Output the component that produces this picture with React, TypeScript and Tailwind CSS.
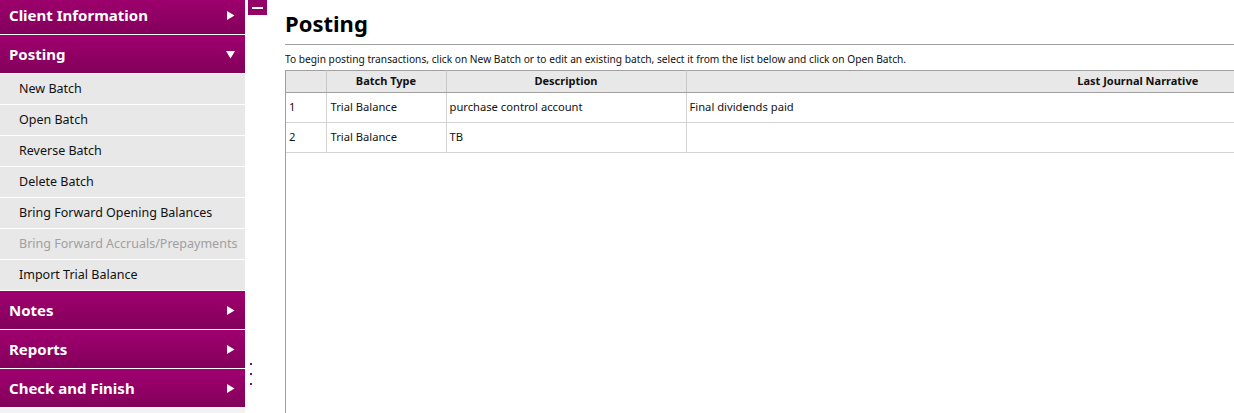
const postingItems = [
  { label: 'New Batch' },
  { label: 'Open Batch' },
  { label: 'Reverse Batch' },
  { label: 'Delete Batch' },
  { label: 'Bring Forward Opening Balances' },
  { label: 'Bring Forward Accruals/Prepayments', disabled: true },
  { label: 'Import Trial Balance' },
];

const batches = [
  { no: 1, type: 'Trial Balance', description: 'purchase control account', narrative: 'Final dividends paid' },
  { no: 2, type: 'Trial Balance', description: 'TB', narrative: '' },
];

function SectionHeader({ title, open }: { title: string; open?: boolean }) {
  return (
    <div className="flex h-[38px] shrink-0 items-center justify-between bg-gradient-to-b from-[#a0006f] to-[#83005b] pl-[9px] pr-[10px] text-[15px] font-bold text-white">
      <span>{title}</span>
      {open ? (
        <svg width="9" height="9" viewBox="0 0 9 9">
          <path d="M0 1h9L4.5 8.5z" fill="#fff" />
        </svg>
      ) : (
        <svg width="9" height="9" viewBox="0 0 9 9">
          <path d="M1 0v9l7.5-4.5z" fill="#fff" />
        </svg>
      )}
    </div>
  );
}

function Sidebar() {
  return (
    <div className="mt-[-4px] flex w-[245px] shrink-0 flex-col gap-px bg-white">
      <SectionHeader title="Client Information" />
      <SectionHeader title="Posting" open />
      <div className="flex shrink-0 flex-col gap-px">
        {postingItems.map((it) => (
          <div
            key={it.label}
            className={`flex h-[30px] shrink-0 items-center bg-[#e8e8e8] pl-[19px] text-[12.5px] ${
              it.disabled ? 'text-[#a0a0a0]' : 'text-[#111]'
            }`}
          >
            {it.label}
          </div>
        ))}
      </div>
      <SectionHeader title="Notes" />
      <SectionHeader title="Reports" />
      <SectionHeader title="Check and Finish" />
      <div className="h-[20px] shrink-0 bg-[#f2f2f2]" />
    </div>
  );
}

export default function App() {
  return (
    <div
      className="flex h-[413px] w-[1234px] overflow-hidden bg-white"
      style={{ fontFamily: '"Noto Sans", "Open Sans", sans-serif' }}
    >
      <Sidebar />
      <div className="flex w-[40px] shrink-0 flex-col pl-[3px]">
        <div className="flex h-[15px] w-[19px] shrink-0 items-center justify-center bg-[#930067]">
          <div className="h-[2px] w-[11px] bg-white" />
        </div>
        <div className="ml-[2px] mt-[348px] flex flex-col gap-[8px]">
          <div className="h-[2px] w-[2px] bg-[#930067]" />
          <div className="h-[2px] w-[2px] bg-[#930067]" />
          <div className="h-[2px] w-[2px] bg-[#930067]" />
        </div>
      </div>
      <div className="flex min-w-0 flex-1 flex-col overflow-hidden">
        <h1 className="pt-[8px] text-[22px] font-bold leading-[30px] text-black">Posting</h1>
        <div className="mt-[6px] h-px shrink-0 bg-[#a0a0a0]" />
        <p className="mt-[7px] text-[10.2px] leading-[14px] text-[#111]">
          To begin posting transactions, click on New Batch or to edit an existing batch, select it from the list below and click on Open Batch.
        </p>
        <div className="mt-[4px] flex-1 border-l border-[#a0a0a0]">
          <table className="w-[1303px] table-fixed border-collapse text-[11.2px] text-[#111]">
            <colgroup>
              <col className="w-[40px]" />
              <col className="w-[120px]" />
              <col className="w-[240px]" />
              <col className="w-[903px]" />
            </colgroup>
            <thead>
              <tr className="h-[22px] bg-[#e8e8e8] text-[11px] font-bold">
                <th className="border-t border-b border-[#a0a0a0] border-r border-r-[#c8c8c8]"></th>
                <th className="border-t border-b border-[#a0a0a0] border-r border-r-[#c8c8c8] text-center">Batch Type</th>
                <th className="border-t border-b border-[#a0a0a0] border-r border-r-[#c8c8c8] text-center">Description</th>
                <th className="border-t border-b border-[#a0a0a0] text-center">Last Journal Narrative</th>
              </tr>
            </thead>
            <tbody>
              {batches.map((b) => (
                <tr key={b.no} className="h-[30px]">
                  <td className="border-b border-r border-[#d4d4d4] pl-[3px]">{b.no}</td>
                  <td className="border-b border-r border-[#d4d4d4] pl-[4px]">{b.type}</td>
                  <td className="border-b border-r border-[#d4d4d4] pl-[3px]">{b.description}</td>
                  <td className="border-b border-[#d4d4d4] pl-[3px]">{b.narrative}</td>
                </tr>
              ))}
            </tbody>
          </table>
        </div>
      </div>
    </div>
  );
}
